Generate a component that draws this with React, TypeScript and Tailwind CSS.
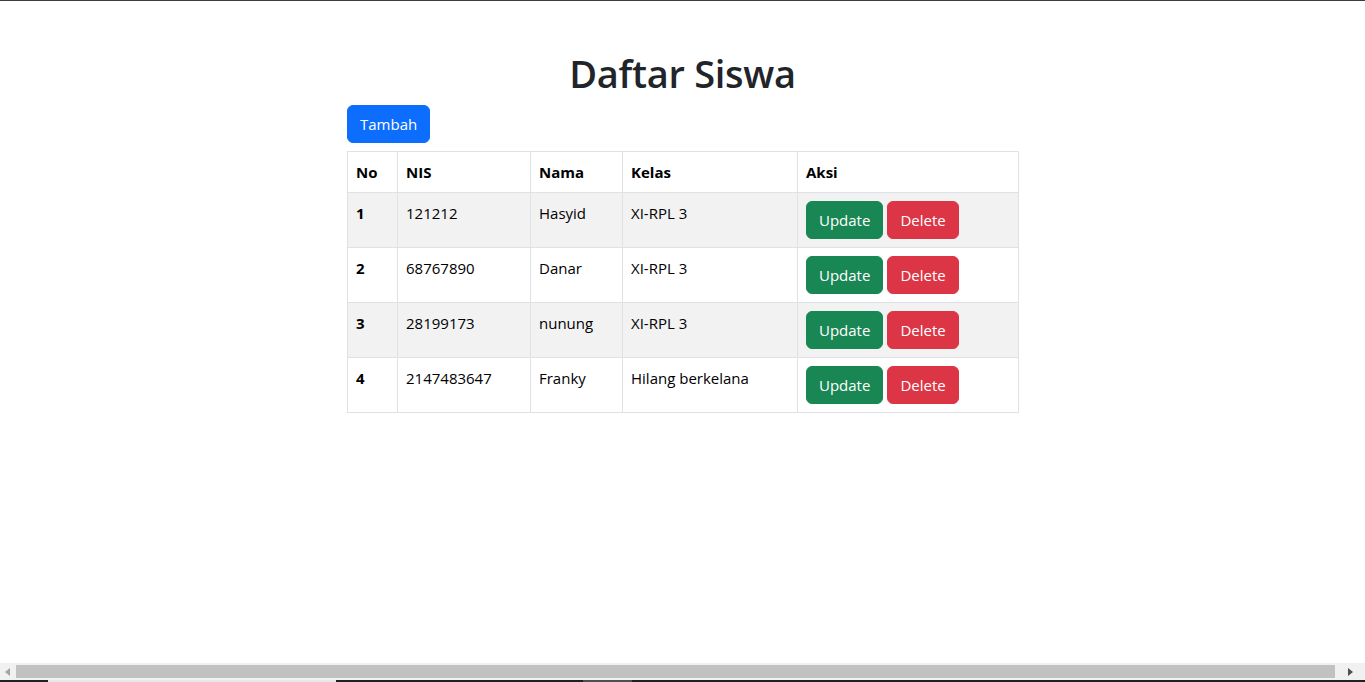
import React from "react";

type Siswa = {
  no: number;
  nis: string;
  nama: string;
  kelas: string;
};

const siswa: Siswa[] = [
  { no: 1, nis: "121212", nama: "Hasyid", kelas: "XI-RPL 3" },
  { no: 2, nis: "68767890", nama: "Danar", kelas: "XI-RPL 3" },
  { no: 3, nis: "28199173", nama: "nunung", kelas: "XI-RPL 3" },
  { no: 4, nis: "2147483647", nama: "Franky", kelas: "Hilang berkelana" },
];

const font = "font-['Open_Sans',_'Noto_Sans',_sans-serif]";

function FakeScrollbar() {
  return (
    <div className="flex flex-col">
      <div className="flex h-[17px] items-center bg-[#f1f1f1]">
        <div className="flex w-[16px] justify-center">
          <svg width="6" height="8" viewBox="0 0 6 8">
            <path d="M5 0 L0 4 L5 8 Z" fill="#a3a3a3" />
          </svg>
        </div>
        <div className="h-[13px] flex-1 bg-[#c1c1c1]" />
        <div className="flex w-[30px] justify-center">
          <svg width="6" height="8" viewBox="0 0 6 8">
            <path d="M1 0 L6 4 L1 8 Z" fill="#505050" />
          </svg>
        </div>
      </div>
      <div className="flex h-[2px] bg-[#202020]">
        <div className="w-[48px]" />
        <div className="w-[288px] bg-[#e8e8e8]" />
        <div className="w-[247px]" />
        <div className="w-[49px] bg-[#505050]" />
      </div>
    </div>
  );
}

export default function App() {
  return (
    <div className={`flex h-[682px] flex-col overflow-hidden bg-white ${font}`}>
      <div className="h-px bg-[#3c3c3c]" />
      <div className="flex-1">
        <div className="mx-auto mt-12 w-[671px]">
          <h1 className="mb-2 text-center text-[38px] leading-[48px] font-semibold tracking-[-0.3px] text-[#212529]">
            Daftar Siswa
          </h1>
          <button className="mb-2 rounded-md border border-[#0d6efd] bg-[#0d6efd] px-3 py-1.5 text-[15px] leading-6 text-white">
            Tambah
          </button>
          <table className="w-[671px] table-fixed border-collapse text-[15px] leading-6 text-black">
            <colgroup>
              <col className="w-[50px]" />
              <col className="w-[133px]" />
              <col className="w-[92px]" />
              <col className="w-[175px]" />
              <col className="w-[221px]" />
            </colgroup>
            <thead>
              <tr>
                {["No", "NIS", "Nama", "Kelas", "Aksi"].map((h) => (
                  <th key={h} className="border border-[#dee2e6] p-2 text-left font-bold">
                    {h}
                  </th>
                ))}
              </tr>
            </thead>
            <tbody>
              {siswa.map((s, i) => (
                <tr key={s.no} className={i % 2 === 0 ? "bg-[#f2f2f2]" : "bg-white"}>
                  <td className="border border-[#dee2e6] p-2 align-top font-bold">{s.no}</td>
                  <td className="border border-[#dee2e6] p-2 align-top">{s.nis}</td>
                  <td className="border border-[#dee2e6] p-2 align-top">{s.nama}</td>
                  <td className="border border-[#dee2e6] p-2 align-top">{s.kelas}</td>
                  <td className="border border-[#dee2e6] p-2 align-top">
                    <div className="flex gap-1">
                      <button className="rounded-md border border-[#198754] bg-[#198754] px-3 py-1.5 leading-6 text-white">
                        Update
                      </button>
                      <button className="rounded-md border border-[#dc3545] bg-[#dc3545] px-3 py-1.5 leading-6 text-white">
                        Delete
                      </button>
                    </div>
                  </td>
                </tr>
              ))}
            </tbody>
          </table>
        </div>
      </div>
      <FakeScrollbar />
    </div>
  );
}
